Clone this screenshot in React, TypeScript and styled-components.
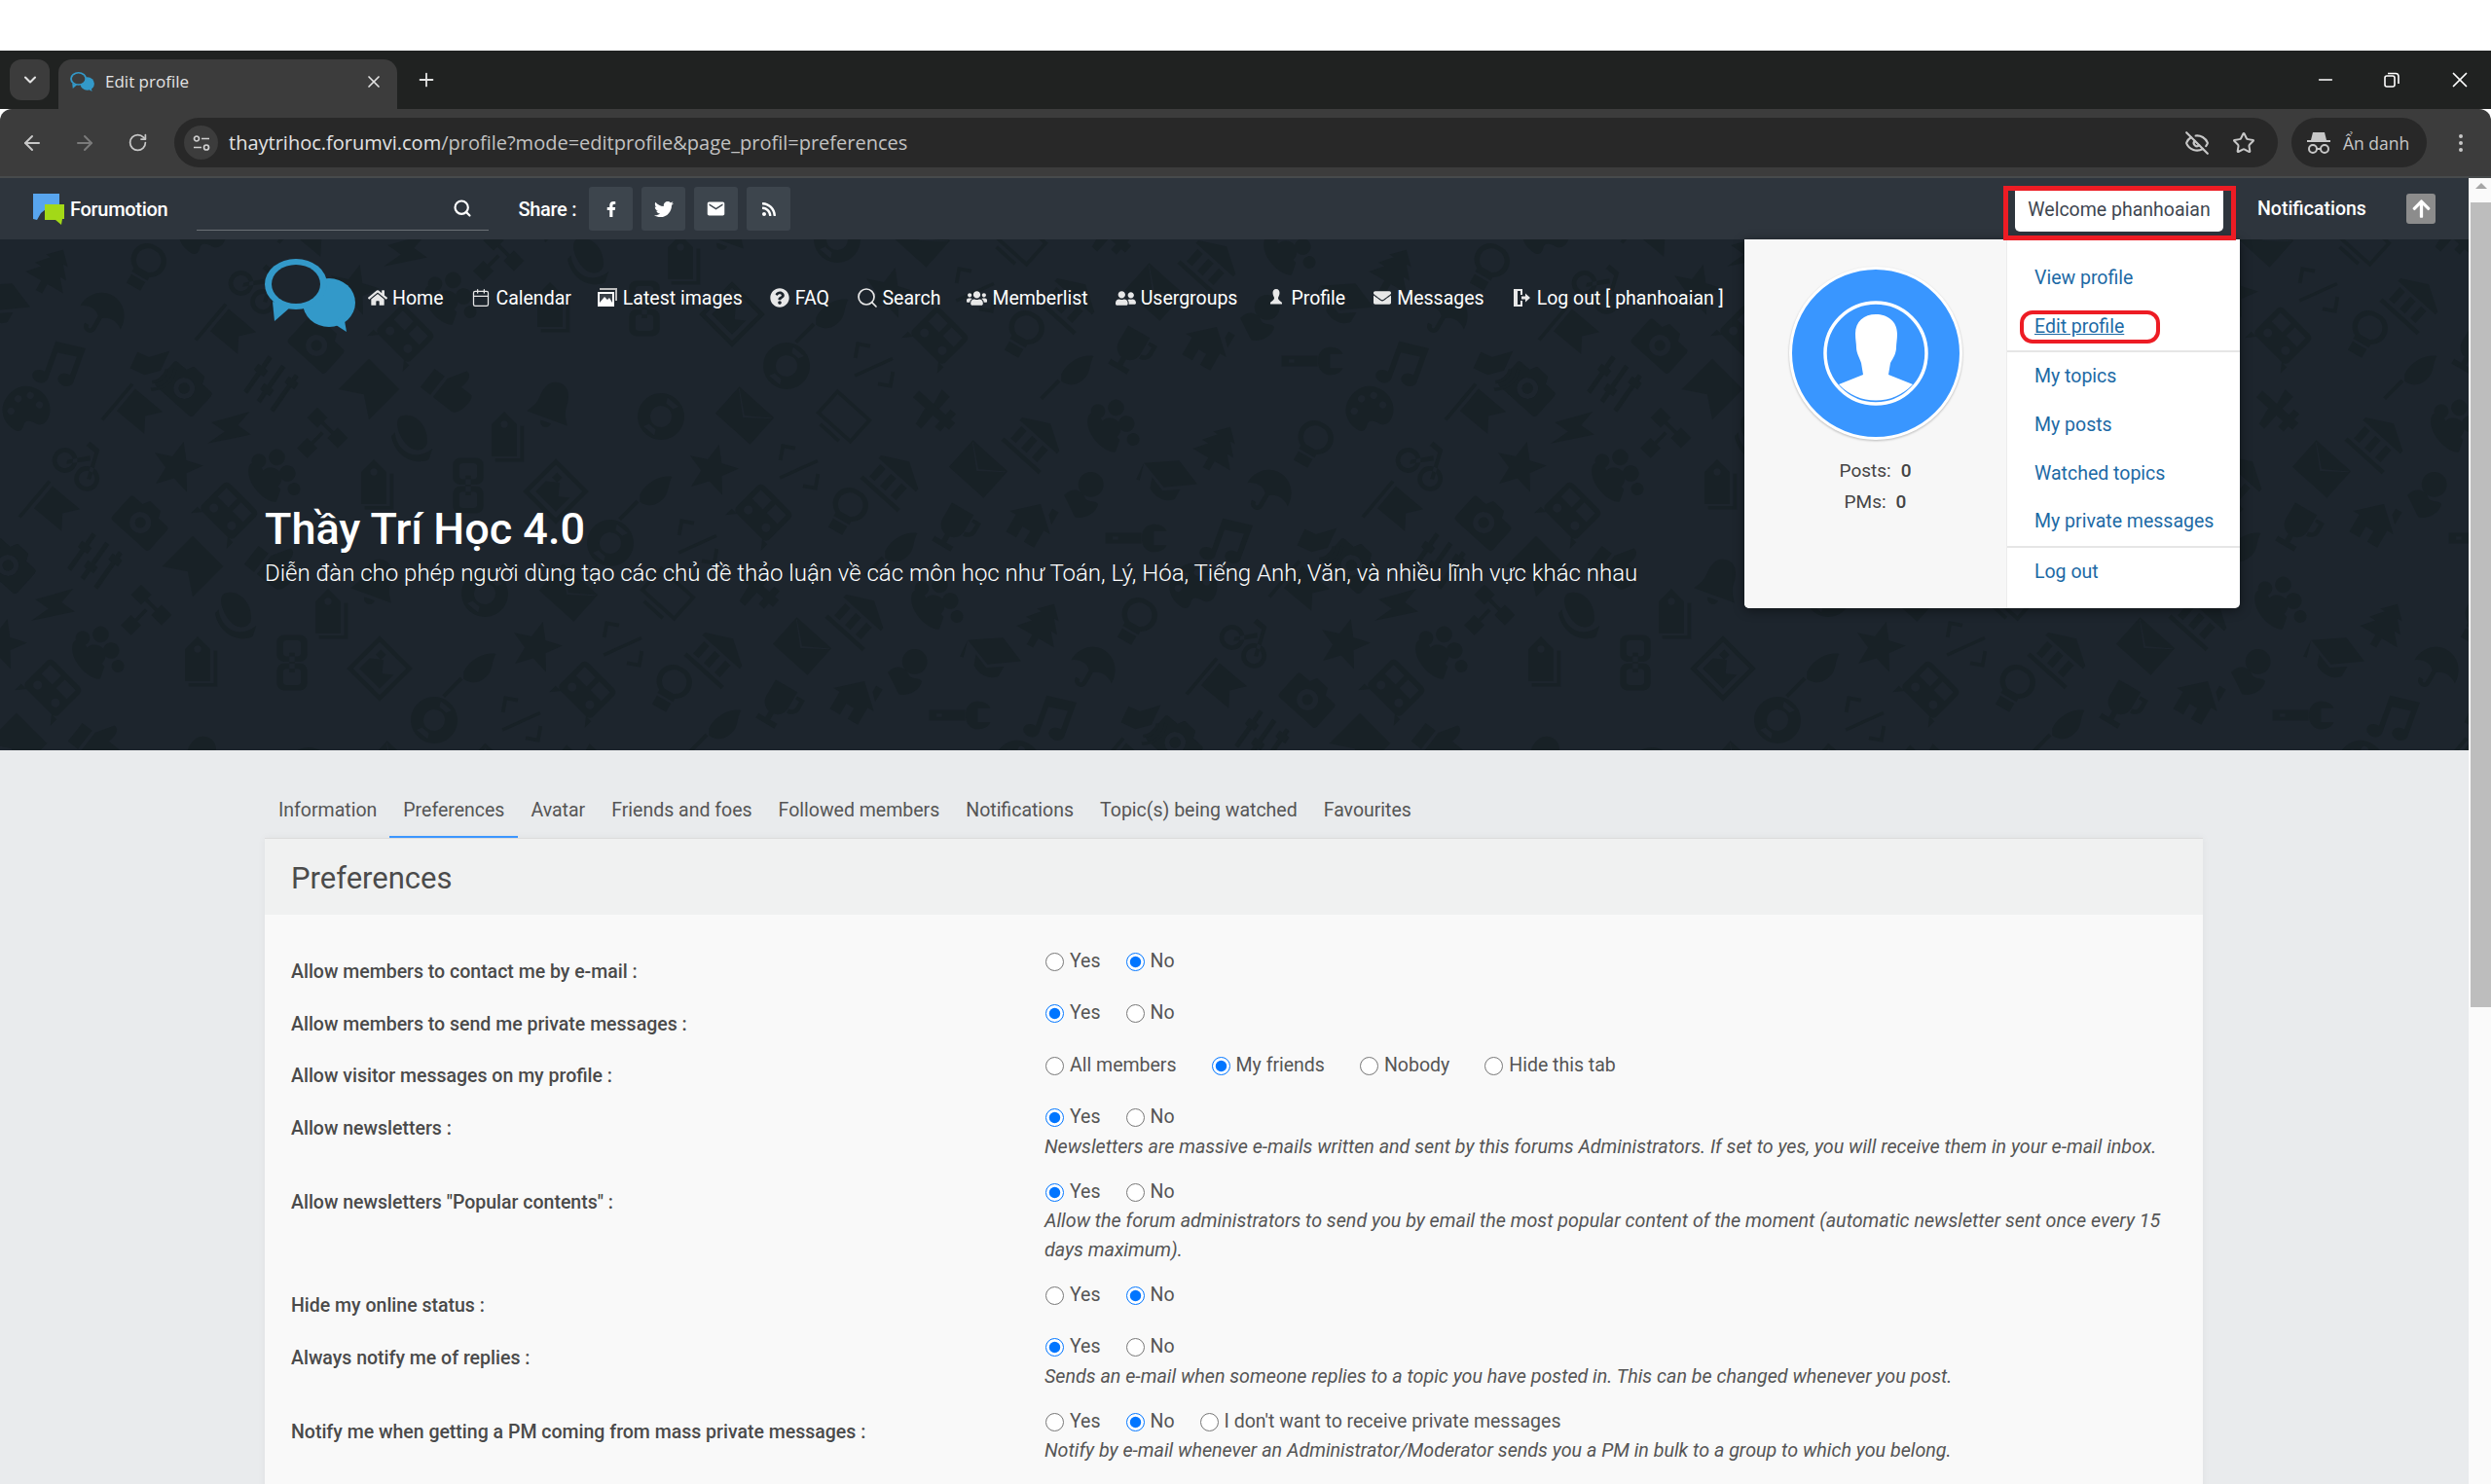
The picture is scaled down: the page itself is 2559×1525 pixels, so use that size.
import * as React from "react";
import styled, { createGlobalStyle } from "styled-components";
import { ArrowLeft, ArrowRight, RotateCw, ChevronDown, X, Plus, Minus, Star, EyeOff, EllipsisVertical, Search, Calendar } from "lucide-react";
import { FaFacebookF, FaTwitter, FaRss, FaHome, FaQuestionCircle, FaUsers, FaUserFriends, FaEnvelope, FaArrowUp } from "react-icons/fa";
import { MdEmail } from "react-icons/md";

const GlobalStyle = createGlobalStyle`
    html, body {
        margin: 0;
        overflow: hidden;
        background: #fff;
    }
    * {
        box-sizing: border-box;
    }
`;

const Root = styled.div`
    width: 2559px;
    height: 1525px;
    display: flex;
    flex-direction: column;
    overflow: hidden;
    font-family: Roboto, "Liberation Sans", sans-serif;
`;

const TopStrip = styled.div`
    height: 52px;
    background: #fff;
`;

const TabStrip = styled.div`
    height: 60px;
    background: #202221;
    display: flex;
    align-items: flex-end;
    color: #e3e3e3;
`;

const TabList = styled.div`
    width: 41px;
    height: 42px;
    margin: 0 9px 9px 10px;
    border-radius: 12px;
    background: #3c3c3c;
    display: flex;
    align-items: center;
    justify-content: center;
`;

const ActiveTab = styled.div`
    width: 348px;
    height: 51px;
    background: #3c3c3c;
    border-radius: 14px 14px 0 0;
    display: flex;
    align-items: center;
    padding: 0 14px 6px 12px;
    font-family: "Open Sans", sans-serif;
    font-size: 17px;
    gap: 11px;
`;

const TabTitle = styled.span`
    flex: 1;
`;

const NewTab = styled.div`
    margin: 0 0 15px 19px;
    height: 30px;
    display: flex;
    align-items: center;
`;

const WindowControls = styled.div`
    margin-left: auto;
    width: 162px;
    margin-right: 19px;
    height: 60px;
    display: flex;
    align-items: center;
    justify-content: space-between;
    color: #fff;
`;

const Toolbar = styled.div`
    height: 71px;
    background: #3c3c3c;
    border-bottom: 2px solid #474a4b;
    border-radius: 12px 12px 0 0;
    display: flex;
    align-items: flex-start;
    padding: 9px 0 0 6px;
    color: #c7c7c7;
`;

const NavIcon = styled.div<{ $dim?: boolean }>`
    width: 54px;
    height: 51px;
    display: flex;
    align-items: center;
    justify-content: center;
    color: ${p => (p.$dim ? "#7a7a7a" : "#c7c7c7")};
`;

const AddressBar = styled.div`
    width: 2161px;
    height: 51px;
    margin-left: 11px;
    border-radius: 26px;
    background: #282828;
    display: flex;
    align-items: center;
    padding: 0 10px;
`;

const SiteInfo = styled.div`
    width: 35px;
    height: 35px;
    border-radius: 50%;
    background: #3c3c3c;
    display: flex;
    align-items: center;
    justify-content: center;
    margin-right: 11px;
`;

const Url = styled.span`
    flex: 1;
    font-family: "Open Sans", sans-serif;
    font-size: 20px;
    color: #e3e3e3;
`;

const UrlDim = styled.span`
    color: #c2c2c2;
`;

const UrlActions = styled.div`
    display: flex;
    align-items: center;
    gap: 23px;
    padding-right: 13px;
`;

const IncognitoPill = styled.div`
    width: 139px;
    height: 51px;
    margin-left: 14px;
    border-radius: 26px;
    background: #282828;
    display: flex;
    align-items: center;
    padding-left: 15px;
    gap: 12px;
    font-family: "Open Sans", sans-serif;
    font-size: 17.5px;
`;

const MenuDots = styled.div`
    margin-left: 23px;
    height: 51px;
    display: flex;
    align-items: center;
`;

const Viewport = styled.div`
    flex: 1;
    display: flex;
    min-height: 0;
`;

const Page = styled.div`
    position: relative;
    width: 2536px;
    background: #e9ebed;
`;

const ScrollTrack = styled.div`
    width: 23px;
    background: #fafafa;
    padding: 5px 0 0 2px;
`;

const ScrollArrow = styled.div`
    width: 0;
    margin: 0 auto 14px;
    border-left: 6px solid transparent;
    border-right: 6px solid transparent;
    border-bottom: 6px solid #a6a6a6;
`;

const ScrollThumb = styled.div`
    height: 827px;
    background: #bdbdbd;
`;

const ForumBar = styled.div`
    position: relative;
    height: 63px;
    background: #2e353d;
    display: flex;
    align-items: center;
    padding: 0 34px 0 33px;
    color: #fff;
`;

const BrandName = styled.span`
    margin-left: 6px;
    font-size: 20px;
    font-weight: 500;
    letter-spacing: -0.3px;
`;

const SearchBox = styled.div`
    width: 300px;
    height: 45px;
    margin-left: 30px;
    border-bottom: 1px solid #6b7076;
    display: flex;
    align-items: center;
    justify-content: flex-end;
    padding-right: 17px;
`;

const ShareLabel = styled.span`
    margin-left: 30px;
    margin-right: 13px;
    font-size: 20px;
    font-weight: 500;
    letter-spacing: -0.3px;
`;

const ShareButton = styled.div`
    width: 45px;
    height: 45px;
    margin-right: 9px;
    border-radius: 3px;
    background: #3d454d;
    display: flex;
    align-items: center;
    justify-content: center;
    color: #fff;
`;

const WelcomeButton = styled.div`
    margin-left: auto;
    width: 214px;
    height: 45px;
    margin-top: 1px;
    border-radius: 0 0 5px 5px;
    background: #fff;
    color: #3e4650;
    font-size: 19.5px;
    display: flex;
    align-items: center;
    justify-content: center;
`;

const Notifications = styled.span`
    width: 111px;
    margin-left: 35px;
    font-size: 19.5px;
    font-weight: 500;
    white-space: nowrap;
`;

const UpButton = styled.div`
    width: 30px;
    height: 31px;
    margin-left: 42px;
    border-radius: 3px;
    background: #8c8c8c;
    display: flex;
    align-items: center;
    justify-content: center;
    color: #fff;
`;

const RedBox = styled.div`
    position: absolute;
    left: 2058px;
    top: 8px;
    width: 239px;
    height: 56px;
    border: 5px solid #ed1c24;
    z-index: 5;
`;

const Banner = styled.div`
    position: relative;
    height: 525px;
    background: #1d252d;
    padding: 20px 0 0 272px;
    overflow: hidden;
    color: #fff;
`;

const Pattern = styled.svg`
    position: absolute;
    left: 0;
    top: 0;
    width: 100%;
    height: 100%;
`;

const BannerContent = styled.div`
    position: relative;
`;

const NavRow = styled.div`
    display: flex;
    height: 75px;
`;

const NavList = styled.div`
    display: flex;
    margin-left: 12px;
    height: 40px;
    margin-top: 20px;
    align-items: center;
`;

const NavItem = styled.div<{ $gap: number }>`
    display: flex;
    align-items: center;
    margin-right: ${p => p.$gap}px;
    font-size: 19.5px;
    white-space: nowrap;
`;

const NavGlyph = styled.span`
    width: 21px;
    height: 24px;
    margin-right: 5px;
    display: flex;
    align-items: center;
    justify-content: center;
    color: #e8e8e8;
    svg {
        flex-shrink: 0;
    }
`;

const Title = styled.h1`
    margin: 177px 0 0;
    font-size: 45px;
    line-height: 52px;
    font-weight: 500;
`;

const Subtitle = styled.div`
    margin-top: 4px;
    font-size: 24px;
    line-height: 30px;
    font-weight: 300;
`;

const UserMenu = styled.div`
    position: absolute;
    left: 1792px;
    top: 63px;
    width: 509px;
    height: 379px;
    display: flex;
    border-radius: 0 0 5px 5px;
    overflow: hidden;
    background: #fff;
    box-shadow: 0 2px 12px rgba(0, 0, 0, 0.45);
    z-index: 4;
`;

const MenuLeft = styled.div`
    width: 270px;
    background: #f7f7f7;
    border-right: 1px solid #ececec;
    display: flex;
    flex-direction: column;
    align-items: center;
    padding-top: 27px;
    font-size: 19px;
    color: #444;
`;

const StatLine = styled.div<{ $first?: boolean }>`
    margin-top: ${p => (p.$first ? 15 : 0)}px;
    line-height: 32px;
`;

const StatValue = styled.span`
    margin-left: 10px;
    font-weight: 500;
`;

const MenuRight = styled.div`
    position: relative;
    flex: 1;
    padding-top: 15px;
`;

const MenuGroup = styled.div<{ $line?: boolean }>`
    border-bottom: ${p => (p.$line ? "2px solid #e6e6e6" : "none")};
`;

const MenuLink = styled.div<{ $active?: boolean }>`
    height: 49.7px;
    line-height: 49.7px;
    padding-left: 28px;
    font-size: 19.5px;
    color: #1d6aa5;
    text-decoration: ${p => (p.$active ? "underline" : "none")};
`;

const RedOval = styled.div`
    position: absolute;
    left: 13px;
    top: 73px;
    width: 144px;
    height: 34px;
    border: 4px solid #ed1c24;
    border-radius: 13px;
`;

const TabsRow = styled.div`
    display: flex;
    margin: 34px 0 0 272px;
    height: 56px;
`;

const ProfileTab = styled.div<{ $active?: boolean }>`
    padding: 0 14px;
    height: 56px;
    line-height: 56px;
    font-size: 19.5px;
    color: #555;
    border-bottom: 2px solid ${p => (p.$active ? "#3c96ff" : "transparent")};
    margin-right: -1px;
`;

const Panel = styled.div`
    margin: 0 273px 0 272px;
    height: 700px;
    border-top: 1px solid #dcdcdc;
    background: #f9f9f9;
    box-shadow: 0 0 8px rgba(0, 0, 0, 0.05);
`;

const PanelHeader = styled.div`
    height: 78px;
    background: #f0f1f1;
    padding-left: 27px;
    font-size: 31px;
    line-height: 81px;
    color: #4b4b4b;
`;

const PanelBody = styled.div`
    padding: 32px 40px 0 27px;
`;

const Row = styled.div`
    display: grid;
    grid-template-columns: 774px 1fr;
    min-height: 53.5px;
`;

const RowLabel = styled.div`
    padding-top: 12px;
    font-size: 19.5px;
    line-height: 30px;
    font-weight: 500;
    color: #4a4a4a;
`;

const RowControls = styled.div`
    padding-bottom: 16px;
`;

const Options = styled.div<{ $gap: number }>`
    display: flex;
    height: 30px;
    align-items: center;
    gap: ${p => p.$gap}px;
`;

const Option = styled.label`
    display: flex;
    align-items: center;
    font-size: 19.5px;
    color: #555;
`;

const Radio = styled.input`
    width: 19px;
    height: 19px;
    margin: 2px 6px 0 1px;
`;

const Help = styled.div`
    margin-top: 1px;
    font-size: 19.7px;
    line-height: 29.5px;
    font-style: italic;
    color: #555;
`;

const Icons: Record<string, React.ReactNode> = {
    camera: <path fillRule="evenodd" d="M-24-14H-12L-8-22H8L12-14H24A4 4 0 0 1 28-10V18A4 4 0 0 1 24 22H-24A4 4 0 0 1-28 18V-10A4 4 0 0 1-24-14ZM0-9A12 12 0 1 0 0 15A12 12 0 1 0 0-9ZM0-3A6 6 0 1 1 0 9A6 6 0 1 1 0-3Z" />,
    sliders: <path d="M-20-24H-16V-10H-12V-2H-16V24H-20V-2H-24V-10H-20ZM-2-24H2V4H6V12H2V24H-2V12H-6V4H-2ZM16-24H20V-18H24V-10H20V24H16V-10H12V-18H16Z" />,
    bookmark: <path d="M-24-24H24V24L0 8L-24 24Z" />,
    thumbs: <path d="M-26-6H-12V20H-26ZM-8-6L4-26C12-26 12-16 10-8H24C30-8 28 20 18 20H-8Z" />,
    bell: <path d="M0-26C-12-26-16-14-16-4C-16 6-22 12-24 16H24C22 12 16 6 16-4C16-14 12-26 0-26ZM-6 20H6C6 28-6 28-6 20Z" />,
    palette: <path fillRule="evenodd" d="M0-26C-20-26-26-10-26 2C-26 16-14 26 0 26C6 26 8 22 6 16C4 10 10 8 16 8C24 8 26 2 26 -2C26-16 14-26 0-26ZM-14-10A4 4 0 1 1-14-2A4 4 0 1 1-14-10ZM-4-20A4 4 0 1 1-4-12A4 4 0 1 1-4-20ZM10-16A4 4 0 1 1 10-8A4 4 0 1 1 10-16ZM-14 6A4 4 0 1 1-14 14A4 4 0 1 1-14 6Z" />,
    flag: <path d="M-24-26H-20V26H-24ZM-16-24H24L12-8L24 8H-16Z" />,
    lightning: <path d="M6-28L-22 6H-4L-12 28L22-8H4Z" />,
    network: <path fillRule="evenodd" d="M-24-24H-8V-8H-24ZM8-24H24V-8H8ZM-8 8H8V24H-8ZM-8-18H8V-14H-8ZM-2-8H2V8H-2Z" />,
    hat: <path fillRule="evenodd" d="M-14-24C2-30 18-14 16 6C14 14 4 16-4 10C-14 2-22-18-14-24ZM-20-6C-18 14 2 28 22 12L18 24C8 30-18 26-24-2Z" />,
    tag: <path fillRule="evenodd" d="M-14-12L0-26L14-12V24H-14ZM0-16A4 4 0 1 0 0-8A4 4 0 1 0 0-16ZM18-10H22V30H-10V26H18Z" />,
    lifebuoy: <path fillRule="evenodd" d="M0-26A26 26 0 1 0 0 26A26 26 0 1 0 0-26ZM0-12A12 12 0 1 1 0 12A12 12 0 1 1 0-12ZM-8-21L8-21L5-15L-5-15ZM-8 21L8 21L5 15L-5 15Z" />,
    bicycle: <path fillRule="evenodd" d="M-16-2A14 14 0 1 0-16 26A14 14 0 1 0-16-2ZM-16 3A9 9 0 1 1-16 21A9 9 0 1 1-16 3ZM16-2A14 14 0 1 0 16 26A14 14 0 1 0 16-2ZM16 3A9 9 0 1 1 16 21A9 9 0 1 1 16 3ZM-8-22H6L20 10L16 12L4-16H-8ZM-14 10L2-10L6-6L-12 14Z" />,
    star: <path d="M0-28L8-9L28-8L12 5L18 25L0 14L-18 25L-12 5L-28-8L-8-9Z" />,
    group: <path d="M-10-26A9 9 0 1 1-10-8A9 9 0 1 1-10-26ZM10-18A9 9 0 1 1 10 0A9 9 0 1 1 10-18ZM26-6A7 7 0 1 1 26 8A7 7 0 1 1 26-6ZM-24-10A8 8 0 1 1-24 6A8 8 0 1 1-24-10ZM-2-6A12 12 0 1 1-2 18A12 12 0 1 1-2-6ZM-30 8C-30 0-20 0-14 4L14 10L18 24C10 32-24 28-30 8Z" />,
    chain: <path fillRule="evenodd" d="M-9-30H9A8 8 0 0 1 17-22V-8A8 8 0 0 1 9 0H-9A8 8 0 0 1-17-8V-22A8 8 0 0 1-9-30ZM-6-24A4 4 0 0 0-10-20V-10A4 4 0 0 0-6-6H6A4 4 0 0 0 10-10V-20A4 4 0 0 0 6-24ZM-9 2H9A8 8 0 0 1 17 10V24A8 8 0 0 1 9 32H-9A8 8 0 0 1-17 24V10A8 8 0 0 1-9 2ZM-6 8A4 4 0 0 0-10 12V22A4 4 0 0 0-6 26H6A4 4 0 0 0 10 22V12A4 4 0 0 0 6 8ZM-3-10H3V12H-3Z" />,
    picture: <path fillRule="evenodd" d="M-26-26H26V26H-26ZM-21-21V21H21V-21ZM-16 16V0L-4-10L6 2L16-6V16ZM-14-16H-6V-8H-14Z" />,
    feather: <path d="M-4-4C4-20 22-26 32-24C26-14 30-4 18 4C10 10 2 8-4 4ZM-28 22L-8 2L-5 5L-25 25Z" />,
    train: <path fillRule="evenodd" d="M-20-24H20A6 6 0 0 1 26-18V14A6 6 0 0 1 20 20H-20A6 6 0 0 1-26 14V-18A6 6 0 0 1-20-24ZM-20-18V-4H-3V-18ZM3-18V-4H20V-18ZM-14 3A5 5 0 1 0-14 13A5 5 0 1 0-14 3ZM14 3A5 5 0 1 0 14 13A5 5 0 1 0 14 3ZM-20 20L-28 30V20ZM20 20L28 30V20Z" />,
    envelope: <path fillRule="evenodd" d="M-26-20H26V20H-26ZM-24-17L0 3L24-17L25-19L0 0L-25-19Z" />,
    tablet: <path fillRule="evenodd" d="M-26-18H26V18H-26ZM-22-14V14H22V-14ZM-14 22H14V26H-14Z" />,
    plane: <path d="M-26-8H14V-16H22V-8H28V2H22V10H14V2H-26ZM-8-26H4V-8H-4ZM-8 2H4V22H-4Z" />,
    museum: <path fillRule="evenodd" d="M-28-10L0-26L28-10V-6H-28ZM-22-2H-14V16H-22ZM-6-2H2V16H-6ZM10-2H18V16H10ZM-28 20H28V25H-28Z" />,
    code: <path d="M-24-22H-8V-18H-20V-4H-24ZM24 22H8V18H20V4H24ZM-20 14L18-12L20-9L-18 17Z" />,
    user: <path d="M4-24A14 14 0 1 1 4 4A14 14 0 1 1 4-24ZM-26 2C-16-8-6-4-2 6C2 10 10 8 12 12C10 24-8 30-14 26Z" />,
    bulb: <path fillRule="evenodd" d="M0-26A18 18 0 0 1 10 8V12H-10V8A18 18 0 0 1 0-26ZM0-21A13 13 0 0 0-6 4H6A13 13 0 0 0 0-21ZM-9 15H9V26H-9Z" />,
    trophy: <path fillRule="evenodd" d="M-14-24H14V-4C14 6 6 10 3 10V18H12V24H-12V18H-3V10C-6 10-14 6-14-4ZM16-20H26V-8C26-2 20 2 15 2V-3C18-3 21-5 21-9V-16H16Z" />,
    house: <path d="M0-24L26 0H18V22H5V8H-5V22H-18V0H-26ZM14-26H22V-10L14-18Z" />,
    wrench: <path fillRule="evenodd" d="M-34-6H6V6H-34ZM-26-2V2H-20V-2ZM14-14C22-18 32-14 34-8H20V8H34C32 14 22 18 14 14C4 10 4-10 14-14Z" />,
    tree: <path d="M0-28L14-14H8L20 0H12L24 14H4V26H-4V14H-24L-12 0H-20L-8-14H-14Z" />,
    cap: <path d="M-32-6L4-22L32-4L-2 12ZM-18 6L-2 16L16 8L14 20C6 28-8 26-16 18ZM-32-6L-34 14H-30Z" />,
    umbrella: <path fillRule="evenodd" d="M0-24C14-24 26-12 26 4C18-2 8-2 2 4V18C2 28-12 28-12 18H-7C-7 22-3 22-3 18V4C-8-2-18-2-26 4C-26-12-14-24 0-24Z" />,
    music: <path d="M-10-22L24-26V14A9 7 0 1 1 18 8V-14L-4-11V20A9 7 0 1 1-10 14Z" />,
    speaker: <path fillRule="evenodd" d="M-24-6H-10L8-22V2L-6 14H-24ZM12-2A16 16 0 0 1 4 16L6 19A20 20 0 0 0 16-2ZM20-6A24 24 0 0 1 6 24L8 27A28 28 0 0 0 24-6Z" />,
};

// icon, x, y and rotation for one row of the background; the picture repeats along (-181, 182)
const PATTERN: [string, number, number, number][] = [
    ["camera", 191, 397, 42], ["sliders", 279, 395, 35], ["bookmark", 379, 400, 45], ["thumbs", 462, 398, 38],
    ["bell", 567, 416, 20], ["palette", 27, 421, 30], ["flag", 136, 426, 40], ["lightning", 237, 441, 35],
    ["network", 326, 450, 45], ["hat", 424, 450, 0], ["tag", 518, 447, 0], ["lifebuoy", 679, 428, 40],
    ["bicycle", 85, 474, 40], ["star", 182, 479, 15], ["group", 283, 488, 35], ["tag", 384, 496, 0],
    ["chain", 481, 498, 0], ["picture", 571, 505, 45], ["feather", 661, 512, 0], ["flag", 51, 526, 40],
    ["camera", 146, 535, 42], ["train", 234, 526, 45], ["lifebuoy", 627, 558, 40], ["camera", 10, 579, 42],
    ["sliders", 97, 576, 35], ["envelope", 765, 427, 42], ["tablet", 867, 428, 42], ["plane", 957, 423, 42],
    ["museum", 1063, 453, 42], ["group", 1145, 437, 35], ["star", 732, 482, 15], ["code", 821, 480, 10],
    ["museum", 918, 492, 42], ["envelope", 1005, 482, 42], ["user", 1117, 507, 0], ["train", 783, 528, 45],
    ["bulb", 870, 525, 30], ["trophy", 978, 542, 30], ["house", 1058, 537, 30], ["wrench", 1167, 553, 0],
    ["code", 717, 557, 10], ["feather", 913, 570, 0], ["cap", 1201, 491, 20], ["tree", 1251, 461, 30],
    ["umbrella", 1304, 505, 30], ["bulb", 1348, 456, 30], ["music", 1258, 555, 20], ["speaker", 1358, 558, 25],
];
const PERIOD = 1380;

const patternItems = () => {
    const items: { key: string; name: string; x: number; y: number; r: number }[] = [];
    PATTERN.forEach(([name, px, py, r], i) => {
        for (let k = -2; k <= 2; k++) {
            for (let c = -1; c <= 3; c++) {
                const x = px - 181 * k + PERIOD * c;
                const y = py + 182 * k - 246;
                if (x > -40 && x < 2576 && y > -40 && y < 565) {
                    items.push({ key: `${i}-${k}-${c}`, name, x, y, r });
                }
            }
        }
    });
    return items;
};

const BannerPattern = () => <Pattern aria-hidden="true">
    <defs>
        {Object.keys(Icons).map(name => <g key={name} id={`bg-${name}`}>{Icons[name]}</g>)}
    </defs>
    <g fill="#182126">
        {patternItems().map(it => <use key={it.key} href={`#bg-${it.name}`} transform={`translate(${it.x} ${it.y}) rotate(${it.r}) scale(.92)`} />)}
    </g>
</Pattern>;

const BubbleLogo = ({ width, height, hole }: { width: number; height: number; hole: string }) => <svg width={width} height={height} viewBox="0 0 93 75" style={{ flexShrink: 0 }}>
    <ellipse cx="66" cy="45" rx="27" ry="25" fill="#3399c9" />
    <path fill="#3399c9" d="M70 66L84 75L81 58Z" />
    <ellipse cx="32" cy="26" rx="32" ry="26" fill="#3399c9" />
    <path fill="#3399c9" d="M8 44L10 64L26 50Z" />
    <ellipse cx="32" cy="26" rx="25" ry="20" fill={hole} />
</svg>;

const ForumotionLogo = () => <svg width="33" height="32" viewBox="0 0 33 32">
    <path fill="#58a5ee" d="M1 0H28V16H14L9 20L5 27L1 26Z" />
    <path fill="#a3d917" d="M13 11H33V26H31L30 32L24 27H13Z" />
</svg>;

const Incognito = () => <svg width="26" height="24" viewBox="0 0 26 24" fill="none" stroke="#c7c7c7" strokeWidth="2">
    <path fill="#c7c7c7" stroke="none" d="M7 1H19L21 9H25V11H1V9H5Z" />
    <circle cx="7" cy="18" r="4" />
    <circle cx="19" cy="18" r="4" />
    <path d="M11 18H15" />
</svg>;

const RestoreIcon = () => <svg width="16" height="16" viewBox="0 0 16 16" fill="none" stroke="#fff" strokeWidth="1.6">
    <rect x="1" y="4" width="10" height="11" rx="2" />
    <path d="M4 1.5H12A3 3 0 0 1 15 4.5V12" />
</svg>;

const SiteTune = () => <svg width="18" height="18" viewBox="0 0 18 18" fill="none" stroke="#d0d0d0" strokeWidth="1.7">
    <circle cx="4" cy="4.5" r="2.5" />
    <path d="M9 4.5H17M1 13.5H9" />
    <circle cx="14" cy="13.5" r="2.5" />
</svg>;

const Avatar = () => <svg width="180" height="180" viewBox="0 0 180 180" style={{ flexShrink: 0, filter: "drop-shadow(0 1px 1px rgba(0,0,0,.25))" }}>
    <circle cx="90" cy="90" r="87.500" fill="#3996ff" stroke="#fff" strokeWidth="3" />
    <circle cx="90" cy="90" r="52" fill="none" stroke="#fff" strokeWidth="3.5" />
    <path fill="#fff" d="M90 50C78 50 69 57 69 70C69 76 70 80 70 84C70 90 74 96 75 100L77 112L52 122A52 52 0 0 0 128 122L103 112L105 100C108 95 111 90 111 84C111 80 112 76 112 70C112 57 102 50 90 50Z" />
</svg>;

const ImagesIcon = () => <svg width="22" height="20" viewBox="0 0 22 20">
    <path fill="#bdbdbd" d="M3 0H21V13H19V2H3Z" />
    <rect x="1" y="4" width="17" height="15" fill="#fff" />
    <rect x="3" y="6" width="13" height="9" fill="#3a4148" />
    <path fill="#fff" d="M3 15L8 9L11 12L13 10L16 15Z" />
</svg>;

const PawnIcon = () => <svg width="14" height="18" viewBox="0 0 14 18" fill="currentColor">
    <path d="M7 0C4.500 0 3.500 2 3.500 4C3.500 6.500 5 8 5 9.500C5 11 2 13 1 14V15.500H13V14C12 13 9 11 9 9.500C9 8 10.500 6.500 10.500 4C10.500 2 9.500 0 7 0Z" />
</svg>;

const LogoutIcon = () => <svg width="18" height="20" viewBox="0 0 18 20" fill="currentColor">
    <path d="M1 1H10V7H8V3H5V17H8V13H10V19H1Z" />
    <path d="M9 8.500H13V5.500L18 10L13 14.500V11.500H9Z" />
</svg>;

const NAV_ITEMS: { icon: React.ReactNode; label: string; gap: number }[] = [
    { icon: <FaHome size={20} />, label: "Home", gap: 28 },
    { icon: <Calendar size={20} strokeWidth={1.5} />, label: "Calendar", gap: 27 },
    { icon: <ImagesIcon />, label: "Latest images", gap: 28 },
    { icon: <FaQuestionCircle size={20} />, label: "FAQ", gap: 28.5 },
    { icon: <Search size={24} strokeWidth={1.7} />, label: "Search", gap: 27 },
    { icon: <FaUsers size={21} />, label: "Memberlist", gap: 28 },
    { icon: <FaUserFriends size={21} />, label: "Usergroups", gap: 29 },
    { icon: <PawnIcon />, label: "Profile", gap: 27 },
    { icon: <FaEnvelope size={18} />, label: "Messages", gap: 28 },
    { icon: <LogoutIcon />, label: "Log out [ phanhoaian ]", gap: 0 },
];

const TABS = ["Information", "Preferences", "Avatar", "Friends and foes", "Followed members", "Notifications", "Topic(s) being watched", "Favourites"];

const ROWS: { label: string; options: string[]; checked: number; gap?: number; help?: string }[] = [
    { label: "Allow members to contact me by e-mail :", options: ["Yes", "No"], checked: 1 },
    { label: "Allow members to send me private messages :", options: ["Yes", "No"], checked: 0 },
    { label: "Allow visitor messages on my profile :", options: ["All members", "My friends", "Nobody", "Hide this tab"], checked: 1, gap: 35 },
    { label: "Allow newsletters :", options: ["Yes", "No"], checked: 0, help: "Newsletters are massive e-mails written and sent by this forums Administrators. If set to yes, you will receive them in your e-mail inbox." },
    { label: "Allow newsletters \"Popular contents\" :", options: ["Yes", "No"], checked: 0, help: "Allow the forum administrators to send you by email the most popular content of the moment (automatic newsletter sent once every 15 days maximum)." },
    { label: "Hide my online status :", options: ["Yes", "No"], checked: 1 },
    { label: "Always notify me of replies :", options: ["Yes", "No"], checked: 0, help: "Sends an e-mail when someone replies to a topic you have posted in. This can be changed whenever you post." },
    { label: "Notify me when getting a PM coming from mass private messages :", options: ["Yes", "No", "I don't want to receive private messages"], checked: 1, help: "Notify by e-mail whenever an Administrator/Moderator sends you a PM in bulk to a group to which you belong." },
];

export default function App() {
    return <Root>
        <GlobalStyle />
        <TopStrip />
        <TabStrip>
            <TabList><ChevronDown size={20} strokeWidth={2.5} /></TabList>
            <ActiveTab>
                <BubbleLogo width={25} height={20} hole="#3c3c3c" />
                <TabTitle>Edit profile</TabTitle>
                <X size={20} />
            </ActiveTab>
            <NewTab><Plus size={22} strokeWidth={2} /></NewTab>
            <WindowControls>
                <Minus size={22} strokeWidth={1.6} />
                <RestoreIcon />
                <X size={26} strokeWidth={1.6} />
            </WindowControls>
        </TabStrip>
        <Toolbar>
            <NavIcon><ArrowLeft size={24} /></NavIcon>
            <NavIcon $dim><ArrowRight size={24} /></NavIcon>
            <NavIcon><RotateCw size={21} /></NavIcon>
            <AddressBar>
                <SiteInfo><SiteTune /></SiteInfo>
                <Url>thaytrihoc.forumvi.com<UrlDim>/profile?mode=editprofile&page_profil=preferences</UrlDim></Url>
                <UrlActions>
                    <EyeOff size={26} />
                    <Star size={24} />
                </UrlActions>
            </AddressBar>
            <IncognitoPill><Incognito />Ẩn danh</IncognitoPill>
            <MenuDots><EllipsisVertical size={24} /></MenuDots>
        </Toolbar>
        <Viewport>
            <Page>
                <ForumBar>
                    <ForumotionLogo />
                    <BrandName>Forumotion</BrandName>
                    <SearchBox><Search size={20} strokeWidth={2.6} /></SearchBox>
                    <ShareLabel>Share :</ShareLabel>
                    <ShareButton><FaFacebookF size={16} /></ShareButton>
                    <ShareButton><FaTwitter size={20} /></ShareButton>
                    <ShareButton><MdEmail size={21} /></ShareButton>
                    <ShareButton><FaRss size={16} /></ShareButton>
                    <WelcomeButton>Welcome phanhoaian</WelcomeButton>
                    <Notifications>Notifications</Notifications>
                    <UpButton><FaArrowUp size={21} /></UpButton>
                    <RedBox />
                </ForumBar>
                <Banner>
                    <BannerPattern />
                    <BannerContent>
                        <NavRow>
                            <BubbleLogo width={93} height={75} hole="#1d252d" />
                            <NavList>
                                {NAV_ITEMS.map(item => <NavItem key={item.label} $gap={item.gap}>
                                    <NavGlyph>{item.icon}</NavGlyph>
                                    {item.label}
                                </NavItem>)}
                            </NavList>
                        </NavRow>
                        <Title>Thầy Trí Học 4.0</Title>
                        <Subtitle>Diễn đàn cho phép người dùng tạo các chủ đề thảo luận về các môn học như Toán, Lý, Hóa, Tiếng Anh, Văn, và nhiều lĩnh vực khác nhau</Subtitle>
                    </BannerContent>
                </Banner>
                <UserMenu>
                    <MenuLeft>
                        <Avatar />
                        <StatLine $first>Posts:<StatValue>0</StatValue></StatLine>
                        <StatLine>PMs:<StatValue>0</StatValue></StatLine>
                    </MenuLeft>
                    <MenuRight>
                        <MenuGroup $line>
                            <MenuLink>View profile</MenuLink>
                            <MenuLink $active>Edit profile</MenuLink>
                        </MenuGroup>
                        <MenuGroup $line>
                            <MenuLink>My topics</MenuLink>
                            <MenuLink>My posts</MenuLink>
                            <MenuLink>Watched topics</MenuLink>
                            <MenuLink>My private messages</MenuLink>
                        </MenuGroup>
                        <MenuGroup>
                            <MenuLink>Log out</MenuLink>
                        </MenuGroup>
                        <RedOval />
                    </MenuRight>
                </UserMenu>
                <TabsRow>
                    {TABS.map(tab => <ProfileTab key={tab} $active={tab === "Preferences"}>{tab}</ProfileTab>)}
                </TabsRow>
                <Panel>
                    <PanelHeader>Preferences</PanelHeader>
                    <PanelBody>
                        {ROWS.map((row, r) => <Row key={row.label}>
                            <RowLabel>{row.label}</RowLabel>
                            <RowControls>
                                <Options $gap={row.gap ?? 25}>
                                    {row.options.map((opt, o) => <Option key={opt}>
                                        <Radio type="radio" name={`row-${r}`} defaultChecked={o === row.checked} />
                                        {opt}
                                    </Option>)}
                                </Options>
                                {row.help && <Help>{row.help}</Help>}
                            </RowControls>
                        </Row>)}
                    </PanelBody>
                </Panel>
            </Page>
            <ScrollTrack>
                <ScrollArrow />
                <ScrollThumb />
            </ScrollTrack>
        </Viewport>
    </Root>;
}
